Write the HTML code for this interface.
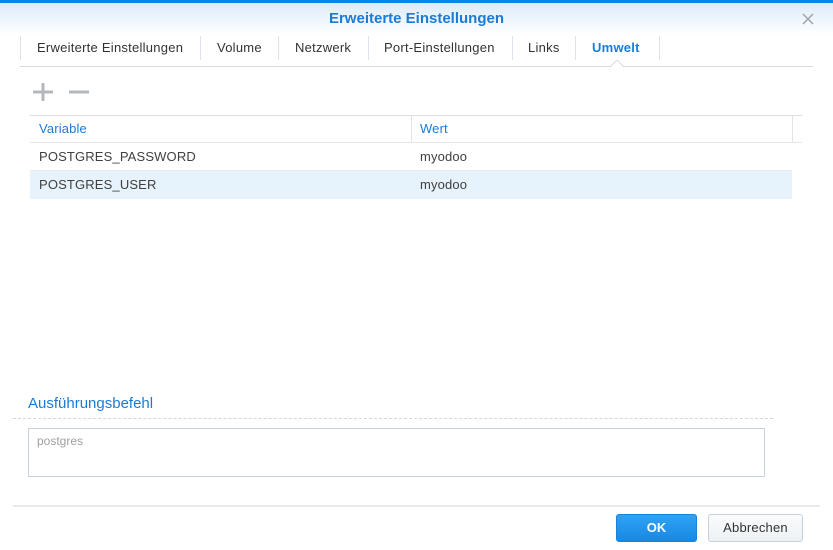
<!DOCTYPE html>
<html><head><meta charset="utf-8"><style>
*{margin:0;padding:0;box-sizing:border-box}
body{width:833px;height:550px;position:relative;background:#fff;font-family:"Liberation Sans",sans-serif;font-size:13px;color:#404040;overflow:hidden}
.a{position:absolute}
.topbar{left:0;top:0;width:833px;height:3px;background:#0a86e0}
.hdr{left:0;top:3px;width:833px;height:32px;background:linear-gradient(#dcebf8,#fff)}
.title{left:0;top:10px;width:833px;text-align:center;font-weight:bold;color:#1a7bd8;font-size:15px}
.tab{top:40px;font-size:13px;color:#333;letter-spacing:0.25px}
.sep{top:36px;width:1px;height:24px;background:#dde3ea}
.t{letter-spacing:0.15px}
</style></head><body>
<div class="a topbar"></div><div class="a hdr"></div>
<div class="a title">Erweiterte Einstellungen</div>
<svg class="a" style="left:801px;top:12px" width="14" height="14"><path d="M2 2L12 12M12 2L2 12" stroke="#9aa3ad" stroke-width="1.4"/></svg>
<div class="a sep" style="left:20px"></div>
<div class="a tab" style="left:37px">Erweiterte Einstellungen</div>
<div class="a sep" style="left:200px"></div>
<div class="a tab" style="left:217px">Volume</div>
<div class="a sep" style="left:278px"></div>
<div class="a tab" style="left:295px">Netzwerk</div>
<div class="a sep" style="left:368px"></div>
<div class="a tab" style="left:384px">Port-Einstellungen</div>
<div class="a sep" style="left:512px"></div>
<div class="a tab" style="left:528px">Links</div>
<div class="a sep" style="left:575px"></div>
<div class="a tab" style="left:592px;font-weight:bold;color:#1a7bd8">Umwelt</div>
<div class="a sep" style="left:659px"></div>
<div class="a" style="left:20px;top:66px;width:793px;height:1px;background:#d5dbe2"></div>
<svg class="a" style="left:610px;top:60px" width="14" height="8"><path d="M0 7L7 0L14 7" fill="#fff" stroke="#d5dbe2"/></svg>
<svg class="a" style="left:32px;top:82px" width="60" height="20"><path d="M11 1V19M1 10H21" stroke="#b4b8bd" stroke-width="3"/><path d="M37 10H57" stroke="#b4b8bd" stroke-width="3"/></svg>
<div class="a" style="left:30px;top:115px;width:772px;height:1px;background:#d8dee5"></div>
<div class="a" style="left:30px;top:142px;width:772px;height:1px;background:#e4e8ec"></div>
<div class="a" style="left:411px;top:116px;width:1px;height:26px;background:#e0e4e8"></div>
<div class="a" style="left:792px;top:116px;width:1px;height:26px;background:#e0e4e8"></div>
<div class="a t" style="left:39px;top:121px;color:#1a7bd8">Variable</div>
<div class="a t" style="left:420px;top:121px;color:#1a7bd8">Wert</div>
<div class="a t" style="left:39px;top:149px">POSTGRES_PASSWORD</div>
<div class="a t" style="left:420px;top:149px">myodoo</div>
<div class="a" style="left:30px;top:170px;width:762px;height:1px;background:#e8ecef"></div>
<div class="a" style="left:30px;top:171px;width:762px;height:28px;background:#e6f2fc"></div>
<div class="a t" style="left:39px;top:177px">POSTGRES_USER</div>
<div class="a t" style="left:420px;top:177px">myodoo</div>
<div class="a" style="left:28px;top:395px;font-size:15px;color:#1a7bd8">Ausführungsbefehl</div>
<div class="a" style="left:13px;top:418px;width:760px;border-top:1px dashed #cfd8e0"></div>
<div class="a" style="left:28px;top:428px;width:737px;height:49px;border:1px solid #c9d3dc"></div>
<div class="a" style="left:37px;top:434px;color:#a0a0a0;font-size:12px">postgres</div>
<div class="a" style="left:13px;top:505px;width:807px;height:2px;background:#e8eaec"></div>
<div class="a" style="left:616px;top:514px;width:81px;height:28px;border-radius:3px;background:linear-gradient(#2fa3f5,#1789e3);border:1px solid #1a83d6;color:#fff;font-weight:bold;text-align:center;line-height:26px">OK</div>
<div class="a" style="left:708px;top:514px;width:95px;height:28px;border-radius:3px;background:linear-gradient(#fafcfd,#edf1f4);border:1px solid #c8d0d8;color:#333;text-align:center;line-height:26px;letter-spacing:0.2px">Abbrechen</div>
</body></html>
